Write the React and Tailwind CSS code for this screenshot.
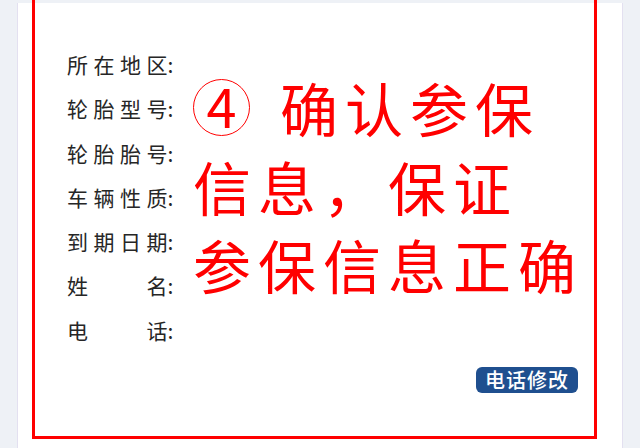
import React from "react";

const font = { fontFamily: '"Noto Sans CJK SC", "Noto Sans", sans-serif' };

const labels = ["所在地区", "轮胎型号", "轮胎胎号", "车辆性质", "到期日期"];

export default function App() {
  return (
    <div
      className="relative w-[640px] h-[448px] overflow-hidden bg-[#eef1f6]"
      style={font}
    >
      <div className="ml-[17px] mt-[3px] w-[606px] h-[445px] bg-white border-l border-r border-[#e3e0f0] flex flex-col">
        <div className="pl-[49px] pt-[39px] text-[21px] leading-[44.3px] tracking-[5.5px] text-[#262626]">
          {labels.map((l) => (
            <div key={l}>
              {l.slice(0, 3)}
              <span className="tracking-normal">{l.slice(3)}</span>:
            </div>
          ))}
          <div>
            <span className="inline-block w-[79.5px]">姓</span>
            <span className="tracking-normal">名</span>:
          </div>
          <div>
            <span className="inline-block w-[79.5px]">电</span>
            <span className="tracking-normal">话</span>:
          </div>
        </div>
        <div className="flex justify-end mr-[44px] mt-[15px]">
          <button className="h-[26px] px-[9px] rounded-[6px] bg-[#1f4f8f] text-white text-[20px] leading-[26px] tracking-[1px] font-medium">
            电话修改
          </button>
        </div>
      </div>

      {/* red annotation overlay */}
      <div className="absolute left-[32px] top-[-3px] w-[565px] h-[442px] border-[3px] border-[#ff0000]"></div>
      <div className="absolute left-[193px] top-[68px] text-[58px] leading-[78.5px] tracking-[7px] text-[#ff0000] whitespace-nowrap">
        <div className="flex items-center">
          <span className="inline-flex items-center justify-center w-[57px] h-[57px] rounded-full border-[1.5px] border-[#ff0000] text-[54px] leading-none tracking-normal mr-[30px]">
            <span className="-mt-[4px]">4</span>
          </span>
          确认参保
        </div>
        <div>信息，保证</div>
        <div>参保信息正确</div>
      </div>
    </div>
  );
}
